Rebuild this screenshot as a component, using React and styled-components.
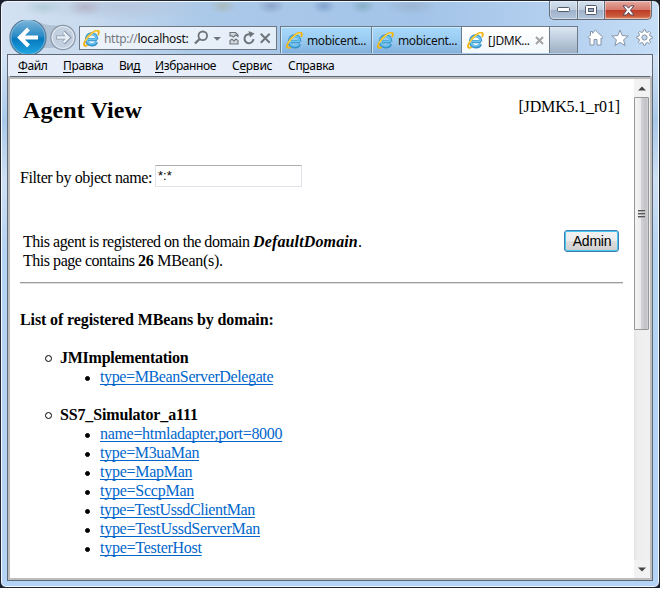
import React from "react";
import styled, { createGlobalStyle } from "styled-components";

const Global = createGlobalStyle`
  * { box-sizing: border-box; }
  body { margin: 0; background: #fff; overflow: hidden; }
`;

const Desktop = styled.div`
  width: 660px;
  height: 588px;
  background: #1b1f2b;
`;

const Window = styled.div`
  width: 660px;
  height: 588px;
  display: flex;
  flex-direction: column;
  border: 1px solid #20242f;
  border-radius: 7px 7px 6px 6px;
  background:
    radial-gradient(ellipse 20px 9px at 42px 6px, #9fc3cb88, transparent),
    radial-gradient(ellipse 18px 9px at 84px 6px, #ad9fb488, transparent),
    radial-gradient(ellipse 90px 14px at 120px 6px, #b6c5dacc, transparent),
    radial-gradient(ellipse 14px 8px at 222px 5px, #a8b3a8aa, transparent),
    radial-gradient(ellipse 14px 8px at 270px 5px, #7e96bcaa, transparent),
    radial-gradient(ellipse 12px 8px at 323px 5px, #6f93c0aa, transparent),
    radial-gradient(ellipse 12px 8px at 362px 5px, #77a3b5aa, transparent),
    radial-gradient(ellipse 26px 9px at 410px 5px, #98aec8aa, transparent),
    linear-gradient(90deg, #d3e1f2 0, #cbdcef 70px, #abc9e9 200px, #a3c4e8 420px, #b4d0ef 560px, #c6def6 657px) 0 0 / 100% 54px no-repeat,
    linear-gradient(#d5e4f5 54px, #a9c9ea 120px, #cfe0f4 180px, #b5d3f3 250px, #b4d3f5 100%);
  box-shadow: inset 0 0 0 1px #f3f8fe;
  overflow: hidden;
`;

const Caption = styled.div`
  height: 19px;
  flex: none;
  display: flex;
  justify-content: flex-end;
  padding-right: 7px;
`;

const CaptionButton = styled.div`
  width: ${(p) => p.$w}px;
  height: 19px;
  display: flex;
  align-items: center;
  justify-content: center;
  border: 1px solid #646d7a;
  border-top: 0;
  border-left-width: ${(p) => (p.$first ? 1 : 0)}px;
  border-radius: ${(p) => (p.$first ? "0 0 0 5px" : p.$close ? "0 0 5px 0" : "0")};
  background: ${(p) =>
    p.$close
      ? "linear-gradient(#e5aaa0, #d6796b 48%, #bd3a24 50%, #cb5a3c 85%, #e39a78)"
      : "linear-gradient(#d5e1ee, #c0cedf 48%, #9fb1c8 50%, #b2c5dc)"};
  box-shadow: inset 0 0 0 1px #ffffff66;
`;

const NavRow = styled.div`
  height: 34px;
  flex: none;
  display: flex;
  align-items: flex-start;
  padding: 0 6px 0 8px;
  overflow: hidden;
`;

const Travel = styled.svg`
  display: block;
  flex: none;
  width: 70px;
  height: 38px;
  margin-top: -2px;
`;

const ui = `font-family: "Noto Sans", "Open Sans", sans-serif; font-size: 12px; white-space: nowrap;`;

const AddressBar = styled.div`
  ${ui}
  width: 198px;
  height: 24px;
  margin-top: 6px;
  flex: none;
  display: flex;
  align-items: center;
  padding-left: 3px;
  border: 1px solid #6f7782;
  background: linear-gradient(90deg, #eef3fa, #e4eef9);
  color: #000;
`;

const Url = styled.span`
  width: 88px;
  margin-left: 4px;
  letter-spacing: ${(p) => p.$ls}px;
  color: #111;
`;
const Scheme = styled.span`
  color: #75797f;
`;

const AddressTools = styled.svg`
  display: block;
  flex: none;
  width: 80px;
  height: 22px;
`;

const Tabs = styled.div`
  display: flex;
  margin: 6px 0 0 3px;
  flex: none;
`;

const Tab = styled.div`
  ${ui}
  width: ${(p) => p.$w}px;
  height: 27px;
  display: flex;
  align-items: center;
  padding-left: 5px;
  border: 1px solid #6e7a88;
  border-bottom: 0;
  border-right-width: ${(p) => (p.$active ? 1 : 0)}px;
  background: ${(p) =>
    p.$active ? "linear-gradient(#fff, #f2f8fd)" : "linear-gradient(#a9d9fa, #9bcdf3 45%, #83b1dd)"};
  box-shadow: ${(p) => (p.$active ? "none" : "inset 1px 1px 0 #c8eafd")};
  letter-spacing: ${(p) => p.$ls}px;
  color: #101010;
`;

const TabLabel = styled.span`
  margin-left: 4px;
  flex: 1;
`;

const CloseMark = styled.svg`
  width: 9px;
  height: 9px;
  margin-right: 5px;
`;

const NewTab = styled.div`
  width: 28px;
  height: 27px;
  border: 1px solid #6e7a88;
  border-left: 0;
  border-bottom: 0;
  background: linear-gradient(#dce7f3, #bccbdc 50%, #9fb0c4);
`;

const Commands = styled.div`
  display: flex;
  gap: 7px;
  margin: 9px 0 0 9px;
`;

const Glyph = styled.svg`
  display: block;
  flex: none;
  width: ${(p) => p.$s}px;
  height: ${(p) => p.$s}px;
`;

const Client = styled.div`
  width: 646px;
  height: 527px;
  margin: 0 0 0 6px;
  flex: none;
  display: flex;
  flex-direction: column;
  border: 1px solid #5f6875;
`;

const MenuBar = styled.div`
  ${ui}
  height: 21px;
  flex: none;
  display: flex;
  align-items: center;
  background: #e7eefa;
  padding-left: 10px;
  color: #000;
`;

const MenuItem = styled.span`
  width: ${(p) => p.$w}px;
  letter-spacing: ${(p) => p.$ls}px;
  line-height: 20px;
`;

const Key = styled.span`
  text-decoration: underline;
  text-underline-offset: 2px;
  text-decoration-thickness: 1px;
`;

const Viewport = styled.div`
  flex: 1;
  display: flex;
  border: 2px solid #bdbdbd;
  border-top: 0;
  box-shadow: inset 0 1px 0 #5f6875, inset 0 3px 0 #bdbdbd;
  padding-top: 3px;
  background: #fff;
`;

const Page = styled.main`
  flex: 1;
  padding: 17px 11px 0 10px;
  font: 16px/19px "Liberation Serif", "Times New Roman", serif;
  color: #000;
`;

const Split = styled.div`
  display: flex;
  justify-content: space-between;
  height: ${(p) => p.$h}px;
  padding: 0 3px;
`;

const Title = styled.h2`
  margin: 0;
  font-size: 24px;
  line-height: 28px;
  letter-spacing: ${(p) => p.$ls}px;
`;

const T = styled.span`
  letter-spacing: ${(p) => p.$ls || 0}px;
  white-space: nowrap;
`;

const Version = styled(T)`
  padding-top: 1px;
`;

const FilterRow = styled.div`
  display: flex;
  height: 65px;
  white-space: nowrap;
`;

const FilterLabel = styled.span`
  width: 135px;
  padding-top: 3px;
  letter-spacing: ${(p) => p.$ls}px;
`;

const FilterInput = styled.div`
  width: 147px;
  height: 22px;
  padding: 1px 2px;
  border: 1px solid #e2e3ea;
  border-top-color: #abadb3;
  border-radius: 1px;
  font: 13px/17px "Liberation Sans", Arial, sans-serif;
`;

const Summary = styled.div`
  padding-top: 2px;
`;

const AdminButton = styled.button`
  width: 55px;
  height: 22px;
  margin: 0 1px 0 0;
  padding: 0 0 1px 1px;
  border: 1px solid #3c7fb1;
  border-radius: 3px;
  background: linear-gradient(#f2f2f2, #ebebeb 49%, #dddddd 50%, #cfcfcf);
  box-shadow: inset 0 0 0 1px #48c6f2;
  font: 14px/18px "Liberation Sans", Arial, sans-serif;
  letter-spacing: -0.2px;
  color: #000;
`;

const Rule = styled.div`
  height: 2px;
  border-top: 1px solid #9c9c9c;
  border-bottom: 1px solid #dedede;
`;

const ListTitle = styled.div`
  margin: 26px 0 19px;
  font-weight: bold;
  letter-spacing: ${(p) => p.$ls}px;
`;

const Domain = styled.section`
  margin-bottom: 19px;
`;

const Entry = styled.div`
  display: flex;
  align-items: center;
  height: 19px;
  padding-left: ${(p) => (p.$nested ? 65 : 25)}px;
  font-weight: ${(p) => (p.$nested ? "normal" : "bold")};
  white-space: nowrap;
`;

const Bullet = styled.i`
  flex: none;
  width: ${(p) => (p.$solid ? 5 : 7)}px;
  height: ${(p) => (p.$solid ? 5 : 7)}px;
  margin: ${(p) => (p.$solid ? "4px 10px 0 0" : "2px 8px 0 0")};
  border: 1px solid #000;
  border-radius: 50%;
  background: ${(p) => (p.$solid ? "#000" : "#fff")};
`;

const Link = styled.a`
  color: #0066cc;
  text-decoration: underline;
  text-decoration-thickness: 1px;
  text-underline-offset: 2px;
  text-decoration-skip-ink: none;
  letter-spacing: ${(p) => p.$ls || 0}px;
`;

const ScrollBar = styled.div`
  width: 16px;
  display: flex;
  flex-direction: column;
  background: linear-gradient(90deg, #e3e3e3, #eee 3px, #f0f0f0);
`;

const ArrowCell = styled.div`
  height: 18px;
  display: flex;
  align-items: center;
  justify-content: center;
  background: #f2f2f2;
`;

const Thumb = styled.div`
  height: 233px;
  width: 15px;
  display: flex;
  flex-direction: column;
  align-items: center;
  justify-content: center;
  gap: 1px;
  border: 1px solid #979797;
  border-radius: 1px;
  background: linear-gradient(90deg, #f5f5f5, #e9e9eb 45%, #d2d2d6 50%, #c1c1c6 85%, #d6d6d8);
`;

const Grip = styled.i`
  width: 7px;
  height: 2px;
  background: linear-gradient(#555 50%, #aaa 50%);
`;

const Fill = styled.div`
  flex: 1;
`;

const IeLogo = () => (
  <Glyph $s={17} viewBox="0 0 17 17">
    <path d="M3.2 9.6H14M13.8 9.4C13.8 1.9 3.5 1.9 3.5 9.2C3.5 15.8 11.3 16.6 13.6 12" fill="none" stroke="#3a92c8" strokeWidth="3.2" />
    <path d="M3.4 9.3H13.5M13.3 8.7C12.8 2.8 4.2 2.9 3.9 9.2C4 14.6 10.5 15.3 13 11.9" fill="none" stroke="#6cc6f0" strokeWidth="1.7" />
    <path d="M4.5 14.9C1.3 17.3-.2 15.1 2.3 10.6C5.3 5.2 11.5.3 14.6.7C16.3 1 16.2 3 15 5" fill="none" stroke="#f0b414" strokeWidth="1.9" />
    <path d="M2.3 11C5 6 11 1.2 14.4 1" fill="none" stroke="#ffe169" strokeWidth=".9" />
  </Glyph>
);

const gear = Array.from({ length: 32 }, (_, i) => {
  const r = i % 4 < 2 ? 7.8 : 5.7;
  const a = ((i - 0.5) / 32) * Math.PI * 2;
  return `${(8.5 + r * Math.cos(a)).toFixed(2)},${(8.5 + r * Math.sin(a)).toFixed(2)}`;
}).join(" ");

const domains = [
  { name: "JMImplementation", ls: -0.25, beans: [["type=MBeanServerDelegate", -0.38]] },
  {
    name: "SS7_Simulator_a111",
    ls: -0.15,
    beans: [
      ["name=htmladapter,port=8000", -0.31],
      ["type=M3uaMan", -0.35],
      ["type=MapMan", -0.27],
      ["type=SccpMan", -0.25],
      ["type=TestUssdClientMan", -0.39],
      ["type=TestUssdServerMan", -0.28],
      ["type=TesterHost", -0.26],
    ],
  },
];

const menus = [
  ["", "Ф", "айл", 45, -0.4],
  ["", "П", "равка", 56, -0.35],
  ["Ви", "д", "", 36, -0.5],
  ["", "И", "збранное", 77, -0.4],
  ["С", "е", "рвис", 56, -0.25],
  ["Сп", "р", "авка", 50, -0.3],
];

export default function App() {
  return (
    <Desktop>
      <Global />
      <Window>
        <Caption>
          <CaptionButton $w={29} $first>
            <svg width="13" height="6"><rect x=".5" y=".5" width="12" height="4" rx="1" fill="#fff" stroke="#535b6b" /></svg>
          </CaptionButton>
          <CaptionButton $w={27}>
            <svg width="13" height="10"><rect x=".5" y=".5" width="11" height="9" rx="1" fill="#fff" stroke="#535b6b" /><rect x="3.5" y="3.5" width="5" height="3" fill="#9badc5" stroke="#535b6b" /></svg>
          </CaptionButton>
          <CaptionButton $w={47} $close>
            <svg width="13" height="11" viewBox="0 0 13 11"><path d="M1 .8H4.3L6.5 3.2L8.7.8H12L8.4 5.3L12 10H8.7L6.5 7.5L4.3 10H1L4.6 5.3Z" fill="#fff" stroke="#58475a" /></svg>
          </CaptionButton>
        </Caption>

        <NavRow>
          <Travel viewBox="0 0 70 38">
            <defs>
              <linearGradient id="back" x2="0" y2="1">
                <stop offset="0" stopColor="#7fb6da" />
                <stop offset=".45" stopColor="#2d8cc6" />
                <stop offset=".55" stopColor="#067ac0" />
                <stop offset="1" stopColor="#24a9e2" />
              </linearGradient>
            </defs>
            <path d="M30 4C38 8 44 7 54 8L50 30H32Z" fill="#9eafc3" opacity=".6" />
            <circle cx="19" cy="19.5" r="18" fill="url(#back)" stroke="#5d7d98" strokeWidth="1.2" />
            <circle cx="19" cy="19.5" r="16.9" fill="none" stroke="#a7d3ec" strokeWidth=".8" opacity=".7" />
            <path d="M29 19.5H12M19.5 11L11 19.5L19.5 28" fill="none" stroke="#fff" strokeWidth="4" />
            <circle cx="54" cy="19.5" r="12.2" fill="#c3d0df" stroke="#8b97a7" strokeWidth="1.2" />
            <circle cx="54" cy="19.5" r="10.9" fill="none" stroke="#e5edf6" />
            <path d="M47 19.5H59M54.5 14L60 19.5L54.5 25" fill="none" stroke="#8d9bad" strokeWidth="4" />
            <path d="M47.8 19.5H59M54.5 14.5L59.5 19.5L54.5 24.5" fill="none" stroke="#e9f0f8" strokeWidth="2.4" />
          </Travel>
          <AddressBar>
            <IeLogo />
            <Url $ls={-0.3}><Scheme>http://</Scheme>localhost:</Url>
            <AddressTools viewBox="0 0 80 22" fill="none" stroke="#6f747a">
              <circle cx="10.8" cy="8.8" r="4.3" strokeWidth="1.8" />
              <path d="M7.6 12L3 16.5" strokeWidth="2.4" />
              <path d="M21.5 10H29L25.2 13.8Z" fill="#6f747a" stroke="none" />
              <path d="M38 9V5.5H43.5L46 8V9.5L43.5 8L41.5 10L39.7 8.8ZM38 13.5V17H46V13.5L44 12L42 14L40 12.2Z" strokeWidth="1.1" fill="#d2d7dd" />
              <path d="M61.5 12.2A4.5 4.5 0 1 1 58 7.3" strokeWidth="2" />
              <path d="M56.5 4L62.5 6.5L58 10.5Z" fill="#6f747a" stroke="none" />
              <path d="M68.8 6.8L77.7 15.7M77.7 6.8L68.8 15.7" strokeWidth="2" />
            </AddressTools>
          </AddressBar>
          <Tabs>
            <Tab $w={91} $ls={-0.35}><IeLogo /><TabLabel>mobicent...</TabLabel></Tab>
            <Tab $w={90} $ls={-0.35}><IeLogo /><TabLabel>mobicent...</TabLabel></Tab>
            <Tab $w={89} $ls={-0.45} $active>
              <IeLogo /><TabLabel>[JDMK...</TabLabel>
              <CloseMark viewBox="0 0 9 9"><path d="M1 1L8 8M8 1L1 8" stroke="#a3a3a3" strokeWidth="2" /></CloseMark>
            </Tab>
            <NewTab />
          </Tabs>
          <Commands>
            <Glyph $s={17} viewBox="0 0 17 17"><path d="M8.5 1.2L16 8.5L14.8 9.7L14 9V16H10V10.5H7V16H3V9L2.2 9.7L1 8.5L3.5 6V2.5H5.5V4.1Z" fill="#fff" stroke="#8694a7" /></Glyph>
            <Glyph $s={18} viewBox="0 0 18 18"><path d="M9 1L11.2 6.6L17.2 7L12.6 10.8L14.1 16.6L9 13.4L3.9 16.6L5.4 10.8L.8 7L6.8 6.6Z" fill="#fff" stroke="#8694a7" /></Glyph>
            <Glyph $s={17} viewBox="0 0 17 17"><polygon points={gear} fill="#fff" stroke="#8694a7" /><circle cx="8.5" cy="8.5" r="2.6" fill="#c3d8ef" stroke="#8694a7" /></Glyph>
          </Commands>
        </NavRow>

        <Client>
          <MenuBar>
            {menus.map(([a, k, b, w, ls]) => (
              <MenuItem key={k} $w={w} $ls={ls}>{a}<Key>{k}</Key>{b}</MenuItem>
            ))}
          </MenuBar>
          <Viewport>
            <Page>
              <Split $h={69}>
                <Title $ls={0.1}>Agent View</Title>
                <Version $ls={-0.15}>[JDMK5.1_r01]</Version>
              </Split>
              <FilterRow>
                <FilterLabel $ls={-0.4}>Filter by object name:</FilterLabel>
                <FilterInput>*:*</FilterInput>
              </FilterRow>
              <Split $h={52}>
                <Summary>
                  <T $ls={-0.47}>This agent is registered on the domain </T>
                  <T $ls={0.13}><b><i>DefaultDomain</i></b>.</T><br />
                  <T $ls={-0.47}>This page contains </T>
                  <T $ls={-0.28}><b>26</b> MBean(s).</T>
                </Summary>
                <AdminButton>Admin</AdminButton>
              </Split>
              <Rule />
              <ListTitle $ls={-0.11}>List of registered MBeans by domain:</ListTitle>
              {domains.map((d) => (
                <Domain key={d.name}>
                  <Entry><Bullet /><T $ls={d.ls}>{d.name}</T></Entry>
                  {d.beans.map(([name, ls]) => (
                    <Entry key={name} $nested><Bullet $solid /><Link $ls={ls}>{name}</Link></Entry>
                  ))}
                </Domain>
              ))}
            </Page>
            <ScrollBar>
              <ArrowCell><svg width="8" height="5"><path d="M0 4.5L4 .5L8 4.5Z" fill="#444" /></svg></ArrowCell>
              <Thumb><Grip /><Grip /><Grip /></Thumb>
              <Fill />
              <ArrowCell><svg width="8" height="5"><path d="M0 .5L4 4.5L8 .5Z" fill="#444" /></svg></ArrowCell>
            </ScrollBar>
          </Viewport>
        </Client>
      </Window>
    </Desktop>
  );
}
